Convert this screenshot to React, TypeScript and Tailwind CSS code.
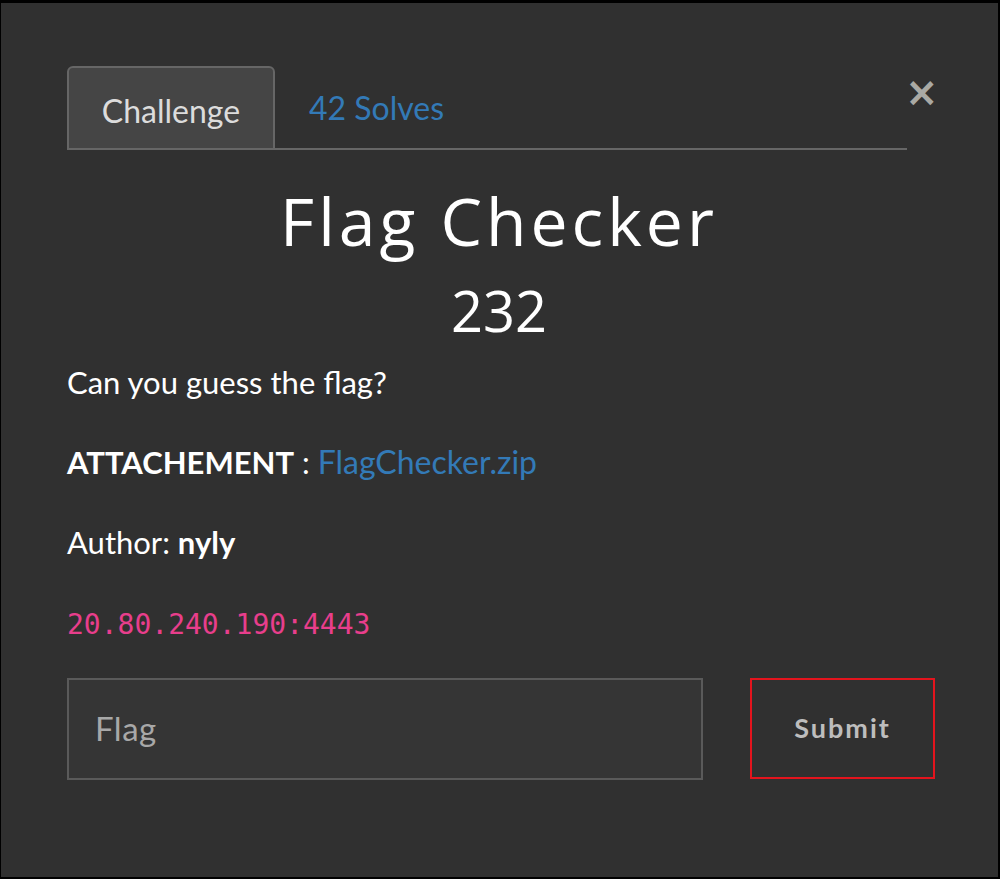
import React from 'react';

const App: React.FC = () => {
  return (
    <div className="w-[1000px] h-[879px] bg-black overflow-hidden font-['Lato','Open_Sans',sans-serif]">
      <div className="ml-[1px] mt-[3px] w-[997px] h-[874px] bg-[#303030] pl-[66px] pr-[60px] pt-[61px] relative">
        <button className="absolute left-[904px] top-[69px] text-[#a9a9a4] text-[40px] leading-none font-bold font-['DejaVu_Sans',sans-serif]">
          ×
        </button>

        <div className="flex items-end w-[840px] border-b-2 border-[#666]">
          <div className="w-[208px] h-[84px] -mb-[2px] pt-[5px] bg-[#454545] border-2 border-[#666] rounded-t-[6px] flex items-center justify-center text-[32px] text-[#dcdcdc]">
            Challenge
          </div>
          <div className="ml-[34px] h-[84px] pt-[4px] flex items-center text-[32px] text-[#337ab7]">42 Solves</div>
        </div>

        <h1 className="mt-[30px] pr-[7px] text-center text-white text-[66px] leading-[80px] tracking-[4px] font-['Open_Sans',sans-serif] font-normal">
          Flag Checker
        </h1>
        <div className="mt-[15px] pr-[7px] text-center text-white text-[56px] leading-[70px] font-['Open_Sans',sans-serif]">
          232
        </div>

        <div className="mt-[15px] text-white text-[31px]">
          <p className="leading-[44px]">Can you guess the flag?</p>
          <p className="mt-[36px] leading-[44px]">
            <span className="font-bold">ATTACHEMENT</span> :{' '}
            <span className="text-[#337ab7] text-[32px]">FlagChecker.zip</span>
          </p>
          <p className="mt-[36px] leading-[44px]">
            Author: <span className="font-bold">nyly</span>
          </p>
          <p className="mt-[36px] leading-[44px]">
            <code className="font-['DejaVu_Sans_Mono',monospace] text-[28px] text-[#e83e8c]">20.80.240.190:4443</code>
          </p>
        </div>

        <div className="mt-[31px] flex items-start">
          <div className="shrink-0 w-[636px] h-[102px] bg-[#353535] border-2 border-[#5a5a5a] flex items-center px-[26px] text-[33px] tracking-[0.5px] text-[#a8a8a8]">
            Flag
          </div>
          <button className="shrink-0 ml-[47px] w-[185px] h-[101px] border-2 border-[#e3141d] flex items-center justify-center text-[27px] font-bold tracking-[2px] text-[#bdbdbd]">
            Submit
          </button>
        </div>
      </div>
    </div>
  );
};

export default App;
